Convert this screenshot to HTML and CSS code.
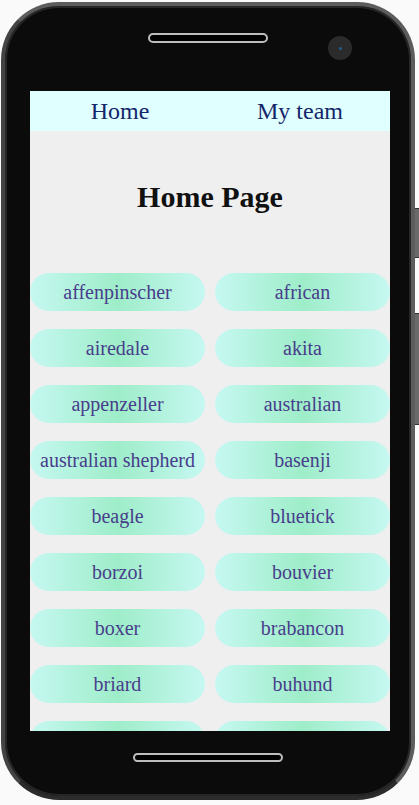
FILE: index.html
```html
<!DOCTYPE html>
<html lang="en">

<head>
    <meta charset="UTF-8">
    <meta name="viewport" content="width=device-width, initial-scale=1.0">
    <title>Dog breeds</title>
    <link rel="stylesheet" href="styles.css">
</head>

<body>
    <div class="phone">
        <span class="side-button volume"></span>
        <span class="side-button power"></span>

        <div class="phone-top">
            <div class="speaker"></div>
            <div class="camera"><span class="lens"></span></div>
        </div>

        <div class="screen">
            <nav class="nav">
                <a class="nav-link">Home</a>
                <a class="nav-link">My team</a>
            </nav>

            <h1 class="page-title">Home Page</h1>

            <div class="breeds">
                <button class="breed">affenpinscher</button>
                <button class="breed">african</button>
                <button class="breed">airedale</button>
                <button class="breed">akita</button>
                <button class="breed">appenzeller</button>
                <button class="breed">australian</button>
                <button class="breed">australian shepherd</button>
                <button class="breed">basenji</button>
                <button class="breed">beagle</button>
                <button class="breed">bluetick</button>
                <button class="breed">borzoi</button>
                <button class="breed">bouvier</button>
                <button class="breed">boxer</button>
                <button class="breed">brabancon</button>
                <button class="breed">briard</button>
                <button class="breed">buhund</button>
                <button class="breed">bulldog</button>
                <button class="breed">bullterrier</button>
            </div>
        </div>

        <div class="phone-bottom">
            <div class="home-bar"></div>
        </div>
    </div>
</body>

</html>
```

FILE: styles.css
```css
body {
    margin: 0;
    background: #fafafa;
    font-family: "Liberation Serif", serif;
}

.phone {
    position: relative;
    width: 406px;
    height: 790px;
    margin: 2px 0 0 1px;
    background: #0b0b0b;
    border: 4px solid #5c5c5c;
    border-bottom-color: #2c2c2c;
    border-left-color: #444;
    border-radius: 58px;
    box-shadow: inset 0 0 0 2px #262626;
    display: flex;
    flex-direction: column;
}

.side-button {
    position: absolute;
    right: -8px;
    width: 4px;
    background: #6a6a6a;
    border-top: 1px solid #333;
    border-bottom: 1px solid #333;
}

.side-button.volume {
    top: 202px;
    height: 48px;
}

.side-button.power {
    top: 307px;
    height: 110px;
}

.phone-top {
    height: 85px;
    display: flex;
    align-items: flex-start;
    padding-left: 143px;
    box-sizing: border-box;
}

.speaker {
    width: 116px;
    height: 6px;
    margin-top: 27px;
    border: 2px solid #bdbdbd;
    border-radius: 6px;
    background: #000;
}

.camera {
    width: 24px;
    height: 24px;
    margin: 30px 0 0 60px;
    border-radius: 50%;
    background: #2b2b2b;
    display: flex;
    align-items: center;
    justify-content: center;
}

.lens {
    width: 3px;
    height: 3px;
    border-radius: 50%;
    background: #1f5f8f;
}

.screen {
    width: 360px;
    height: 640px;
    margin-left: 25px;
    background: #efefef;
    overflow: hidden;
}

.nav {
    display: grid;
    grid-template-columns: 1fr 1fr;
    height: 40px;
    background: #e0ffff;
}

.nav-link {
    text-align: center;
    font-size: 24px;
    line-height: 40px;
    color: #14266a;
}

.page-title {
    margin: 49px 0 59px;
    font-size: 30px;
    line-height: 34px;
    text-align: center;
    color: #111;
}

.breeds {
    display: grid;
    grid-template-columns: 1fr 1fr;
    column-gap: 10px;
    row-gap: 18px;
}

.breed {
    height: 38px;
    padding: 0;
    border: none;
    border-radius: 19px;
    background: linear-gradient(to right, #c6f8f1, #9eedc9 50%, #c6f8f1);
    font-family: "Liberation Serif", serif;
    font-size: 20px;
    line-height: 38px;
    color: #483d8b;
    white-space: nowrap;
}

.phone-bottom {
    flex: 1;
    padding: 22px 0 0 128px;
}

.home-bar {
    width: 146px;
    height: 5px;
    border: 2px solid #bdbdbd;
    border-radius: 6px;
    background: #000;
}
```
